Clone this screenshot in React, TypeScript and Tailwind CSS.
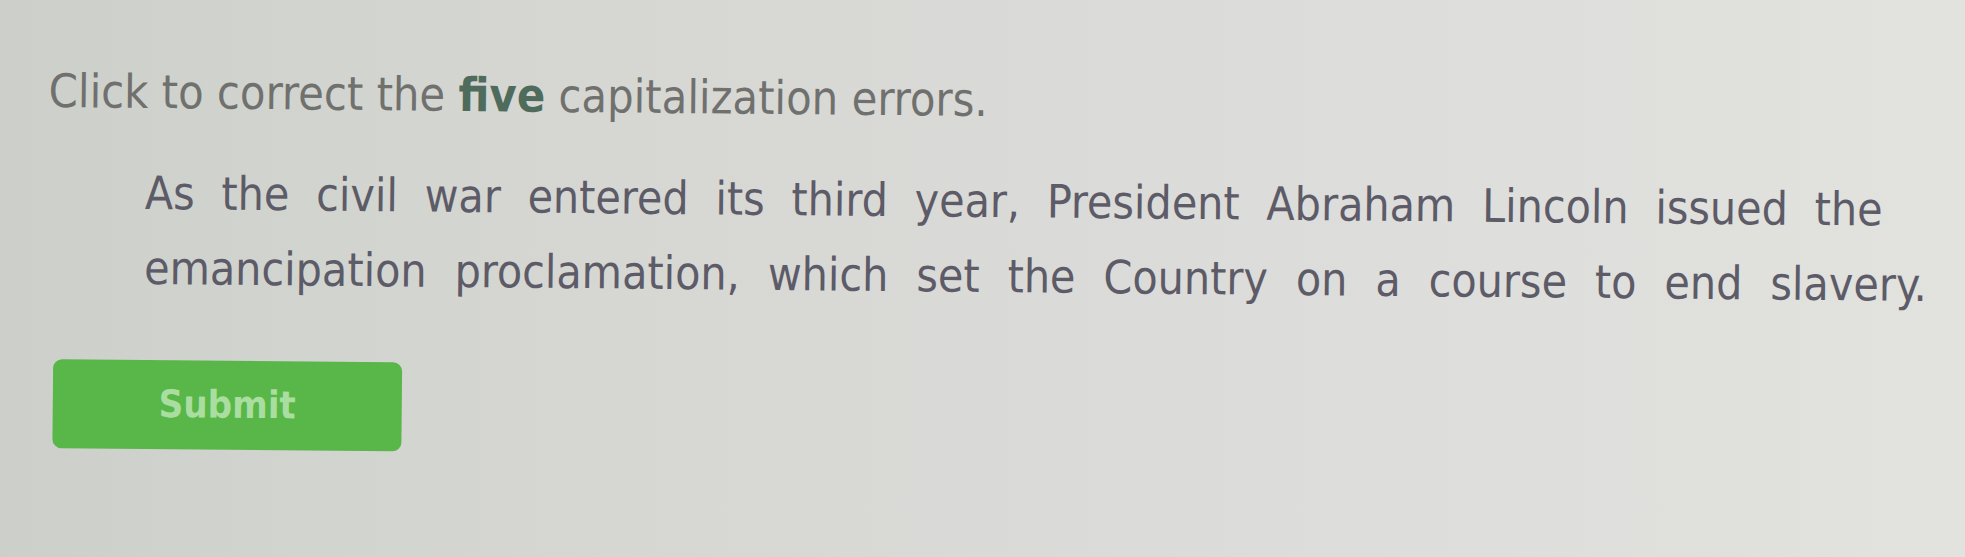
import React from "react";

const line1 = "As the civil war entered its third year, President Abraham Lincoln issued the".split(" ");
const line2 = "emancipation proclamation, which set the Country on a course to end slavery.".split(" ");

function Line({ words, className }: { words: string[]; className: string }) {
  return (
    <div className={`flex justify-between whitespace-nowrap h-[75px] leading-[75px] ${className}`}>
      {words.map((w, i) => (
        <span key={i}>{w}</span>
      ))}
    </div>
  );
}

export default function App() {
  return (
    <div
      className="w-full h-[557px] overflow-hidden pl-[49px] pt-[67px] font-stretch-condensed bg-[linear-gradient(90deg,#cdd0ca_0%,#d6d7d3_30%,#dcdcda_65%,#e2e2df_100%)]"
      style={{ fontFamily: '"DejaVu Sans Condensed", "DejaVu Sans", Verdana, sans-serif' }}
    >
      <div className="origin-top-left rotate-[0.55deg]">
        <div className="text-[46.5px] leading-[48px] text-[#70716e] whitespace-nowrap">
          Click to correct the <span className="font-bold text-[#4f6b5b]">five</span> capitalization errors.
        </div>
        <div className="mt-[40px] ml-[97px] text-[46px] text-[#5c5b67]">
          <Line words={line1} className="w-[1738px]" />
          <Line words={line2} className="w-[1783px]" />
        </div>
        <button className="mt-[54px] ml-[7px] w-[349px] h-[89px] rounded-[9px] bg-[#58b748] flex items-center justify-center text-[38px] font-bold text-[#a9dea0]">
          Submit
        </button>
      </div>
    </div>
  );
}
